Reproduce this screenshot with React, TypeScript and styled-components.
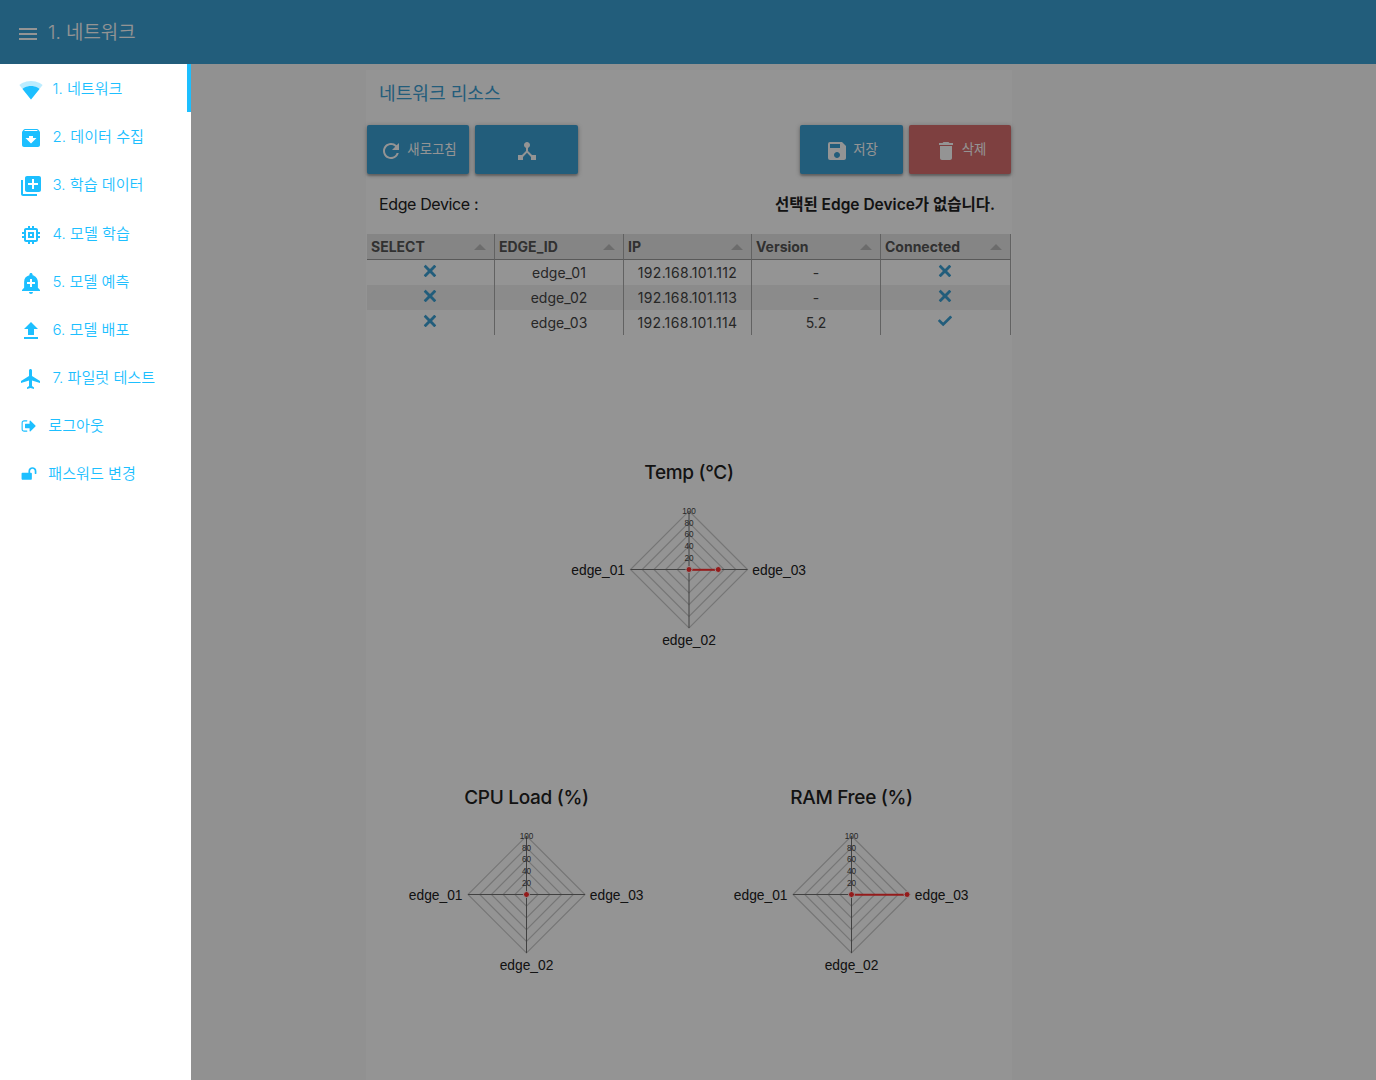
import React from 'react';
import styled, { createGlobalStyle } from 'styled-components';
import {
  MdMenu, MdArchive, MdLibraryAdd, MdMemory, MdAddAlert, MdFileUpload,
  MdRefresh, MdDeviceHub, MdSave, MdDelete,
} from 'react-icons/md';

const GlobalStyle = createGlobalStyle`
  * { box-sizing: border-box; }
  body {
    margin: 0;
    background: #fafafa;
    font-family: Inter, "Noto Sans CJK KR", sans-serif;
    color: #212121;
    overflow: hidden;
  }
`;

const Page = styled.div`
  height: 1080px;
  display: flex;
  flex-direction: column;
`;

const Header = styled.header`
  height: 64px;
  flex: none;
  background: #3ca0d4;
  color: #fff;
  display: flex;
  align-items: center;
  padding-left: 16px;
`;

const MenuButton = styled.button`
  border: 0;
  background: none;
  color: inherit;
  padding: 3px 0 0;
  display: flex;
`;

const HeaderTitle = styled.h1`
  margin: 0 0 0 8px;
  padding-top: 2px;
  font-size: 18.9px;
  font-weight: 350;
  line-height: 28px;
`;

const Panel = styled.main`
  width: 646px;
  height: 1010px;
  margin: 6px auto 0;
  padding: 0 1px;
  background: #fff;
  transform: translateX(1px);
`;

const PanelTitle = styled.h2`
  margin: 0;
  padding: 8px 12px 0;
  height: 55px;
  font-size: 18.1px;
  line-height: 30px;
  font-weight: 400;
  color: #3ca0d4;
`;

const Toolbar = styled.div`
  display: grid;
  grid-template-columns: 102px 103px 1fr 103px 102px;
  column-gap: 6px;
  height: 49px;
`;

const ToolButton = styled.button<{ $danger?: boolean; $column?: number }>`
  grid-column: ${(p) => p.$column ?? 'auto'};
  border: 0;
  border-radius: 2px;
  padding: 0;
  background: ${(p) => (p.$danger ? '#d96e6e' : '#3ca0d4')};
  color: #fff;
  font: 400 13.4px/20px Inter, "Noto Sans CJK KR", sans-serif;
  display: flex;
  align-items: center;
  justify-content: center;
  gap: 4px;
  box-shadow: 0 1px 5px rgba(0, 0, 0, 0.3), 0 2px 2px rgba(0, 0, 0, 0.2);
  svg { margin-top: 3px; flex: none; }
  span { padding-bottom: 1px; }
`;

const DeviceRow = styled.div`
  display: flex;
  justify-content: space-between;
  align-items: center;
  height: 60px;
  padding: 0 16px 0 12px;
  font-size: 16px;
`;

const DeviceLabel = styled.span`
  letter-spacing: -0.38px;
`;

const DeviceNotice = styled.strong`
  font-size: 15.5px;
  font-weight: 600;
  padding-bottom: 3px;
`;

const Table = styled.div`
  display: grid;
  grid-template-columns: 128px 129px 128px 129px 130px;
  font-size: 14px;
  color: #555;
`;

const HeadCell = styled.div`
  height: 26px;
  background: #e6e6e6;
  border-right: 1px solid #aaa;
  border-bottom: 1px solid #999;
  display: flex;
  align-items: center;
  justify-content: space-between;
  padding: 0 8px 0 4px;
  font-weight: 700;
`;

const SortArrow = styled.i`
  border: 6px solid transparent;
  border-top: 0;
  border-bottom-color: #bbb;
`;

const Cell = styled.div<{ $even: boolean; $spaced?: boolean }>`
  height: 25px;
  background: ${(p) => (p.$even ? '#efefef' : '#fff')};
  border-right: 1px solid #aaa;
  display: flex;
  align-items: center;
  justify-content: center;
  color: #444;
  letter-spacing: ${(p) => (p.$spaced ? '0.35px' : 'normal')};
  svg { margin: 0 1px 3px 0; }
`;

const Charts = styled.section`
  display: grid;
  grid-template-columns: 1fr 1fr;
  column-gap: 6px;
  padding-top: 72px;
`;

const ChartCard = styled.figure<{ $wide?: boolean }>`
  grid-column: ${(p) => (p.$wide ? '1 / -1' : 'auto')};
  margin: 0;
  height: 325px;
  padding-top: 51px;
  display: flex;
  flex-direction: column;
  align-items: center;
`;

const ChartTitle = styled.figcaption`
  font-size: 19px;
  font-weight: 450;
  line-height: 30px;
  letter-spacing: -0.3px;
`;

const ChartSvg = styled.svg`
  flex: none;
  font-family: "Liberation Sans", Arial, sans-serif;
`;

const Scrim = styled.div`
  position: fixed;
  inset: 0;
  background: rgba(0, 0, 0, 0.42);
`;

const Drawer = styled.nav`
  position: fixed;
  top: 64px;
  left: 0;
  bottom: 0;
  width: 191px;
  background: #fff;
`;

const NavItem = styled.a<{ $active?: boolean; $small?: boolean }>`
  height: 48.16px;
  display: flex;
  align-items: center;
  padding-left: ${(p) => (p.$small ? 21 : 19)}px;
  gap: ${(p) => (p.$small ? 11.3 : 9.5)}px;
  color: #1dbfff;
  font-size: 15.1px;
  font-weight: 350;
  white-space: nowrap;
  border-right: 4px solid ${(p) => (p.$active ? '#1dbfff' : 'transparent')};
  svg { flex: none; margin-top: ${(p) => (p.$small ? 1 : 4)}px; }
  span { padding-bottom: 2px; }
`;

const Cross = () => (
  <svg width="14" height="14" viewBox="0 0 24 24" fill="#3ca0d4">
    <path d="M22.245,4.015c0.313,0.313,0.313,0.826,0,1.139l-6.276,6.27c-0.313,0.312-0.313,0.826,0,1.14l6.273,6.272c0.313,0.313,0.313,0.826,0,1.14l-2.285,2.277c-0.314,0.312-0.828,0.312-1.142,0l-6.271-6.271c-0.313-0.313-0.828-0.313-1.141,0l-6.276,6.267c-0.313,0.313-0.828,0.313-1.141,0l-2.282-2.28c-0.313-0.313-0.313-0.826,0-1.14l6.278-6.269c0.313-0.312,0.313-0.826,0-1.14L1.709,5.147c-0.314-0.313-0.314-0.827,0-1.14l2.284-2.278C4.308,1.417,4.821,1.417,5.135,1.73L11.405,8c0.314,0.314,0.828,0.314,1.141,0.001l6.276-6.267c0.312-0.312,0.826-0.312,1.141,0L22.245,4.015z" />
  </svg>
);

const Tick = () => (
  <svg width="14" height="14" viewBox="0 0 24 24" fill="#3ca0d4">
    <path d="M21.652,3.211c-0.293-0.295-0.77-0.295-1.061,0L9.41,14.34c-0.293,0.297-0.771,0.297-1.062,0L3.449,9.351C3.304,9.203,3.114,9.13,2.923,9.129C2.73,9.128,2.534,9.201,2.387,9.351l-2.165,1.946C0.078,11.445,0,11.63,0,11.823c0,0.194,0.078,0.397,0.223,0.544l4.94,5.184c0.292,0.296,0.771,0.776,1.062,1.07l2.124,2.141c0.292,0.293,0.769,0.293,1.062,0l14.366-14.34c0.293-0.294,0.293-0.777,0-1.071L21.652,3.211z" />
  </svg>
);

const WifiIcon = () => (
  <svg width="24" height="24" viewBox="0 0 24 24" fill="currentColor">
    <path fillOpacity=".3" d="M12.01 21.49L23.64 7c-.45-.34-4.93-4-11.64-4C5.28 3 .81 6.66.36 7l11.63 14.49.01.01.01-.01z" />
    <path d="M3.53 10.95l8.46 10.54.01.01.01-.01 8.46-10.54C20.04 10.62 16.81 8 12 8c-4.81 0-8.04 2.62-8.47 2.95z" />
  </svg>
);

const PlaneIcon = () => (
  <svg width="24" height="24" viewBox="0 0 24 24" fill="currentColor">
    <path d="M21 16v-2l-8-5V3.5c0-.83-.67-1.5-1.5-1.5S10 2.67 10 3.5V9l-8 5v2l8-2.5V19l-2 1.5V22l3.5-1 3.5 1v-1.5L13 19v-5.5l8 2.5z" />
  </svg>
);

const SignOutIcon = () => (
  <svg width="16" height="16" viewBox="0 0 1792 1792" fill="currentColor">
    <path d="M704 1440q0 4 1 20t.5 26.5-3 23.5-10 19.5-20.5 6.5h-320q-119 0-203.5-84.5t-84.5-203.5v-704q0-119 84.5-203.5t203.5-84.5h320q13 0 22.5 9.5t9.5 22.5q0 4 1 20t.5 26.5-3 23.5-10 19.5-20.5 6.5h-320q-66 0-113 47t-47 113v704q0 66 47 113t113 47h312l11.5 1 11.5 3 8 5.5 7 9 2 13.5zm928-544q0 26-19 45l-544 544q-19 19-45 19t-45-19-19-45v-288h-448q-26 0-45-19t-19-45v-384q0-26 19-45t45-19h448v-288q0-26 19-45t45-19 45 19l544 544q19 19 19 45z" />
  </svg>
);

const UnlockIcon = () => (
  <svg width="16" height="16" viewBox="0 0 1792 1792" fill="currentColor">
    <path d="M1728 576v256q0 26-19 45t-45 19h-64q-26 0-45-19t-19-45v-256q0-106-75-181t-181-75-181 75-75 181v192h96q40 0 68 28t28 68v576q0 40-28 68t-68 28h-960q-40 0-68-28t-28-68v-576q0-40 28-68t68-28h672v-192q0-185 131.5-316.5t316.5-131.5 316.5 131.5 131.5 316.5z" />
  </svg>
);

const CY = 81.5;
const RADIUS = 58.5;

function RadarChart({ title, value, wide }: { title: string; value: number; wide?: boolean }) {
  const width = wide ? 300 : 301;
  const cx = width / 2;
  const end = cx + (RADIUS * value) / 100;
  return (
    <ChartCard $wide={wide}>
      <ChartTitle>{title}</ChartTitle>
      <ChartSvg width={width} height="180">
        {[20, 40, 60, 80, 100].map((t) => {
          const r = (RADIUS * t) / 100;
          return (
            <path
              key={t}
              d={`M${cx} ${CY - r}L${cx + r} ${CY}L${cx} ${CY + r}L${cx - r} ${CY}Z`}
              fill="none"
              stroke="#cccccc"
              strokeWidth="1.2"
            />
          );
        })}
        <path d={`M${cx - RADIUS} ${CY}H${cx + RADIUS}M${cx} ${CY - RADIUS}V${CY + RADIUS}`} stroke="#707070" />
        {[20, 40, 60, 80, 100].map((t) => (
          <text key={t} x={cx} y={CY - (RADIUS * t) / 100 + 3} fontSize="8.2" textAnchor="middle" fill="#444">{t}</text>
        ))}
        <g fontSize="13.8" fill="#212121">
          <text x={cx - 64} y={CY + 5} textAnchor="end">edge_01</text>
          <text x={cx} y={CY + 75} textAnchor="middle">edge_02</text>
          <text x={cx + 63.3} y={CY + 5}>edge_03</text>
        </g>
        {value > 0 && <path d={`M${cx} ${CY + 0.3}H${end}`} stroke="#ff3030" strokeWidth="2" />}
        <circle cx={cx} cy={CY} r="3" fill="#ff3030" stroke="#fff" />
        {value > 0 && <circle cx={end} cy={CY} r="3" fill="#ff3030" stroke="#fff" />}
      </ChartSvg>
    </ChartCard>
  );
}

const columns = ['SELECT', 'EDGE_ID', 'IP', 'Version', 'Connected'];
const devices = [
  { id: 'edge_01', ip: '192.168.101.112', version: '-', connected: false },
  { id: 'edge_02', ip: '192.168.101.113', version: '-', connected: false },
  { id: 'edge_03', ip: '192.168.101.114', version: '5.2', connected: true },
];

const navItems = [
  { icon: <WifiIcon />, label: '1. 네트워크', active: true },
  { icon: <MdArchive size={24} />, label: '2. 데이터 수집' },
  { icon: <MdLibraryAdd size={24} />, label: '3. 학습 데이터' },
  { icon: <MdMemory size={24} />, label: '4. 모델 학습' },
  { icon: <MdAddAlert size={24} />, label: '5. 모델 예측' },
  { icon: <MdFileUpload size={24} />, label: '6. 모델 배포' },
  { icon: <PlaneIcon />, label: '7. 파일럿 테스트' },
  { icon: <SignOutIcon />, label: '로그아웃', small: true },
  { icon: <UnlockIcon />, label: '패스워드 변경', small: true },
];

export default function App() {
  return (
    <>
      <GlobalStyle />
      <Page>
        <Header>
          <MenuButton aria-label="menu"><MdMenu size={24} /></MenuButton>
          <HeaderTitle>1. 네트워크</HeaderTitle>
        </Header>
        <Panel>
          <PanelTitle>네트워크 리소스</PanelTitle>
          <Toolbar>
            <ToolButton><MdRefresh size={24} /><span>새로고침</span></ToolButton>
            <ToolButton><MdDeviceHub size={24} /></ToolButton>
            <ToolButton $column={4}><MdSave size={24} /><span>저장</span></ToolButton>
            <ToolButton $danger><MdDelete size={24} /><span>삭제</span></ToolButton>
          </Toolbar>
          <DeviceRow>
            <DeviceLabel>Edge Device :</DeviceLabel>
            <DeviceNotice>선택된 Edge Device가 없습니다.</DeviceNotice>
          </DeviceRow>
          <Table>
            {columns.map((c) => <HeadCell key={c}>{c}<SortArrow /></HeadCell>)}
            {devices.map((d, i) => {
              const even = i % 2 === 1;
              return (
                <React.Fragment key={d.id}>
                  <Cell $even={even}><Cross /></Cell>
                  <Cell $even={even}>{d.id}</Cell>
                  <Cell $even={even} $spaced>{d.ip}</Cell>
                  <Cell $even={even}>{d.version}</Cell>
                  <Cell $even={even}>{d.connected ? <Tick /> : <Cross />}</Cell>
                </React.Fragment>
              );
            })}
          </Table>
          <Charts>
            <RadarChart title="Temp (°C)" value={50} wide />
            <RadarChart title="CPU Load (%)" value={0} />
            <RadarChart title="RAM Free (%)" value={95} />
          </Charts>
        </Panel>
      </Page>
      <Scrim />
      <Drawer>
        {navItems.map((n) => (
          <NavItem key={n.label} $active={n.active} $small={n.small}>
            {n.icon}
            <span>{n.label}</span>
          </NavItem>
        ))}
      </Drawer>
    </>
  );
}
